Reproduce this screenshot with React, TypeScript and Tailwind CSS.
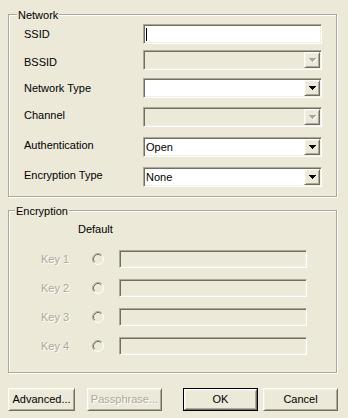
import React from "react";

const sunken =
  "border border-t-[#aca899] border-l-[#aca899] border-b-white border-r-white shadow-[inset_1px_1px_0_#716f64,inset_-1px_-1px_0_#f1efe2] p-[1px]";
const raised =
  "border border-t-white border-l-white border-b-[#716f64] border-r-[#716f64] shadow-[inset_1px_1px_0_#f1efe2,inset_-1px_-1px_0_#aca899]";
const disabledText = "text-[#aca899] [text-shadow:1px_1px_0_#ffffff]";

function Arrow({ disabled }: { disabled?: boolean }) {
  const d = "M0 0h7v1H0zM1 1h5v1H1zM2 2h3v1H2zM3 3h1v1H3z";
  return (
    <svg width="8" height="5" viewBox="0 0 8 5" shapeRendering="crispEdges">
      {disabled ? (
        <>
          <path d={d} fill="#ffffff" transform="translate(1 1)" />
          <path d={d} fill="#aca899" />
        </>
      ) : (
        <path d={d} fill="#000000" />
      )}
    </svg>
  );
}

function Combo({ value, disabled }: { value?: string; disabled?: boolean }) {
  return (
    <div
      className={`flex h-[20px] w-[179px] ${sunken} ${
        disabled ? "bg-[#ece9d8]" : "bg-white"
      }`}
    >
      <div className="flex flex-1 items-center pl-[1px]">{value}</div>
      <div
        className={`flex h-[16px] w-[16px] items-center justify-center bg-[#ece9d8] pl-[1px] pt-[1px] ${raised}`}
      >
        <Arrow disabled={disabled} />
      </div>
    </div>
  );
}

function Radio() {
  return (
    <svg width="12" height="12" viewBox="0 0 12 12">
      <circle cx="6" cy="6" r="4.5" fill="#ece9d8" />
      <path d="M2.11 9.89A5.5 5.5 0 0 1 9.89 2.11" fill="none" stroke="#aca899" strokeWidth="1" />
      <path d="M9.89 2.11A5.5 5.5 0 0 1 2.11 9.89" fill="none" stroke="#ffffff" strokeWidth="1" />
      <path d="M2.82 9.18A4.5 4.5 0 0 1 9.18 2.82" fill="none" stroke="#716f64" strokeWidth="1" />
      <path d="M9.18 2.82A4.5 4.5 0 0 1 2.82 9.18" fill="none" stroke="#f1efe2" strokeWidth="1" />
    </svg>
  );
}

function Group({
  title,
  titleLeft,
  className,
  children,
}: {
  title: string;
  titleLeft: string;
  className: string;
  children: React.ReactNode;
}) {
  return (
    <div
      className={`relative w-[329px] border border-[#aca899] shadow-[inset_1px_1px_0_#ffffff,1px_1px_0_#ffffff] ${className}`}
    >
      <span className={`absolute top-[-6px] ${titleLeft} bg-[#ece9d8] px-[1px]`}>{title}</span>
      {children}
    </div>
  );
}

function Button({
  label,
  w,
  disabled,
  isDefault,
}: {
  label: string;
  w: string;
  disabled?: boolean;
  isDefault?: boolean;
}) {
  const inner = (
    <div
      className={`flex h-full w-full items-center justify-center bg-[#ece9d8] ${raised} ${
        disabled ? disabledText : ""
      }`}
    >
      {label}
    </div>
  );
  if (isDefault) {
    return <div className={`h-[23px] ${w} border border-black`}>{inner}</div>;
  }
  return <div className={`h-[23px] ${w}`}>{inner}</div>;
}

export default function App() {
  return (
    <div className="h-[418px] w-[348px] bg-[#ece9d8] px-[8px] pt-[14px] font-['Liberation_Sans',Arial,sans-serif] text-[11px] leading-[13px] text-black">
      <Group title="Network" titleLeft="left-[8px]" className="pb-[9px] pl-[15px] pt-[9px]">
        <div className="flex h-[20px] items-center">
          <span className="w-[119px]">SSID</span>
          <div className={`flex h-[20px] w-[179px] items-center bg-white ${sunken}`}>
            <div className="ml-[1px] h-[13px] w-[1px] bg-black" />
          </div>
        </div>
        <div className="mt-[6px] flex h-[20px] items-center">
          <span className="w-[119px] pt-[5px]">BSSID</span>
          <Combo disabled />
        </div>
        <div className="mt-[8px] flex h-[20px] items-center">
          <span className="w-[119px]">Network Type</span>
          <Combo />
        </div>
        <div className="mt-[9px] flex h-[20px] items-center">
          <span className="w-[119px] pb-[3px]">Channel</span>
          <Combo disabled />
        </div>
        <div className="mt-[10px] flex h-[20px] items-center">
          <span className="w-[119px] pb-[4px]">Authentication</span>
          <Combo value="Open" />
        </div>
        <div className="mt-[10px] flex h-[20px] items-center">
          <span className="w-[119px] pb-[4px]">Encryption Type</span>
          <Combo value="None" />
        </div>
      </Group>

      <Group title="Encryption" titleLeft="left-[6px]" className="mt-[13px] pb-[17px] pl-[32px] pt-[12px]">
        <div className="ml-[37px] h-[13px]">Default</div>
        {["Key 1", "Key 2", "Key 3", "Key 4"].map((k, i) => (
          <div
            key={k}
            className={`flex h-[18px] items-center ${i === 0 ? "mt-[14px]" : "mt-[11px]"}`}
          >
            <span className={`w-[51px] ${disabledText}`}>{k}</span>
            <Radio />
            <div className={`ml-[15px] h-[18px] w-[188px] bg-[#ece9d8] ${sunken}`} />
          </div>
        ))}
      </Group>

      <div className="mt-[15px] flex w-[330px] justify-between">
        <div className="flex gap-[12px]">
          <Button label="Advanced..." w="w-[67px]" />
          <Button label="Passphrase..." w="w-[75px]" disabled />
        </div>
        <div className="flex gap-[5px]">
          <Button label="OK" w="w-[75px]" isDefault />
          <Button label="Cancel" w="w-[75px]" />
        </div>
      </div>
    </div>
  );
}
